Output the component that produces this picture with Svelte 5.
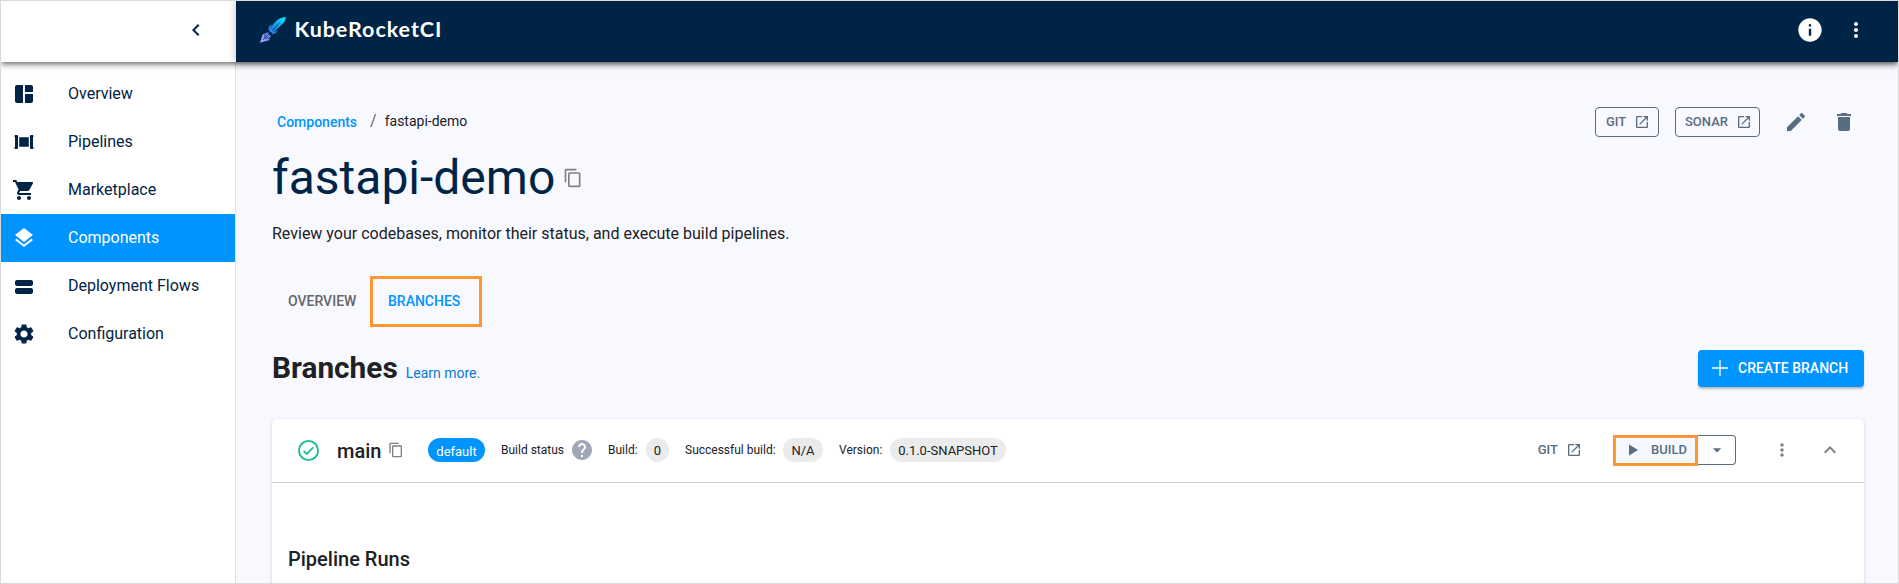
<script>
  const nav = [
    { label: 'Overview', icon: 'M11 21H5c-1.1 0-2-.9-2-2V5c0-1.1.9-2 2-2h6v18zm2 0h6c1.1 0 2-.9 2-2v-7h-8v9zm8-11V5c0-1.1-.9-2-2-2h-6v7h8z' },
    { label: 'Pipelines', icon: 'M7.200 7.200h9.600v9.600H7.200zM2.300 6.200q0-1.200 1.300-1.200h1.200q1.200 0 1.200 1.200v11.600q0 1.200-1.200 1.200H3.600q-1.300 0-1.300-1.200v-.6h.7V6.800h-.7zM18 6.200q0-1.200 1.200-1.200h1.200q1.300 0 1.300 1.200v.6H21v10.400h.7v.6q0 1.200-1.300 1.200h-1.200q-1.200 0-1.200-1.200z' },
    { label: 'Marketplace', icon: 'M7 18c-1.100 0-1.990.9-1.990 2S5.900 22 7 22s2-.9 2-2-.9-2-2-2zM1 2v2h2l3.600 7.590-1.350 2.450c-.16.28-.25.61-.25.96 0 1.100.9 2 2 2h12v-2H7.420c-.14 0-.25-.11-.25-.25l.03-.12.9-1.630h7.450c.75 0 1.410-.41 1.750-1.030l3.580-6.490A1.003 1.003 0 0 0 20 4H5.210l-.94-2H1zm16 16c-1.100 0-1.990.9-1.990 2s.89 2 1.990 2 2-.9 2-2-.9-2-2-2z' },
    { label: 'Components', active: true, icon: 'm11.990 18.540-7.370-5.730L3 14.070l9 7 9-7-1.630-1.270-7.380 5.740zM12 16l7.360-5.730L21 9l-9-7-9 7 1.630 1.270L12 16z' },
    { label: 'Deployment Flows', icon: 'M3 17v-1c0-1.300 1-2 2-2h14c1 0 2 .7 2 2v2c0 1.300-1 2-2 2H5c-1 0-2-.7-2-2zM5 6h14c1 0 2 .7 2 2v2c0 1.300-1 2-2 2H5c-1 0-2-.7-2-2V8c0-1.300 1-2 2-2z' },
    { label: 'Configuration', icon: 'M19.140 12.940c.04-.3.06-.61.06-.94 0-.32-.02-.64-.07-.94l2.030-1.580c.18-.14.23-.41.12-.61l-1.920-3.320c-.12-.22-.37-.29-.59-.22l-2.390.96c-.5-.38-1.030-.7-1.620-.94l-.36-2.540c-.04-.24-.24-.41-.48-.41h-3.840c-.24 0-.43.17-.47.41l-.36 2.540c-.59.24-1.130.57-1.620.94l-2.390-.96c-.22-.08-.47 0-.59.22L2.740 8.870c-.12.21-.08.47.12.61l2.030 1.580c-.05.3-.09.63-.09.94s.02.64.07.94l-2.030 1.580c-.18.14-.23.41-.12.61l1.920 3.320c.12.22.37.29.59.22l2.390-.96c.5.38 1.030.7 1.620.94l.36 2.540c.05.24.24.41.48.41h3.840c.24 0 .44-.17.47-.41l.36-2.540c.59-.24 1.130-.56 1.620-.94l2.390.96c.22.08.47 0 .59-.22l1.920-3.320c.12-.22.07-.47-.12-.61l-2.010-1.580zM12 15.600c-1.980 0-3.600-1.620-3.600-3.600s1.620-3.600 3.600-3.600 3.600 1.620 3.600 3.600-1.620 3.600-3.600 3.600z' }
  ];
  const COPY = 'M16 1H4c-1.100 0-2 .9-2 2v14h2V3h12V1zm3 4H8c-1.100 0-2 .9-2 2v14c0 1.100.9 2 2 2h11c1.100 0 2-.9 2-2V7c0-1.100-.9-2-2-2zm0 16H8V7h11v14z';
  const OPEN = 'M19 19H5V5h7V3H5c-1.110 0-2 .9-2 2v14c0 1.100.89 2 2 2h14c1.100 0 2-.9 2-2v-7h-2v7zM14 3v2h3.590l-9.830 9.830 1.410 1.410L19 6.410V10h2V3h-7z';
  const DOTS = 'M12 8c1.100 0 2-.9 2-2s-.9-2-2-2-2 .9-2 2 .9 2 2 2zm0 2c-1.100 0-2 .9-2 2s.9 2 2 2 2-.9 2-2-.9-2-2-2zm0 6c-1.100 0-2 .9-2 2s.9 2 2 2 2-.9 2-2-.9-2-2-2z';
</script>

{#snippet icon(d, size)}
  <svg width={size} height={size} viewBox="0 0 24 24" fill="currentColor"><path {d} /></svg>
{/snippet}

<div class="app">
  <header>
    <div class="collapse">
      <svg width="24" height="24" viewBox="0 0 24 24" fill="currentColor"><path d="M15.410 7.410 14 6l-6 6 6 6 1.410-1.410L10.830 12z" /></svg>
    </div>
    <div class="bar">
      <svg class="rocket" width="28" height="28" viewBox="0 0 28 28">
        <defs>
          <linearGradient id="rg" x1="26" y1="2" x2="2" y2="26" gradientUnits="userSpaceOnUse">
            <stop offset="0" stop-color="#00e5ff" /><stop offset=".5" stop-color="#1f80e8" /><stop offset=".7" stop-color="#6a8cf0" /><stop offset="1" stop-color="#a9a0ff" />
          </linearGradient>
        </defs>
        <path fill="url(#rg)" d="M26.800 1c-4.500.2-8 2.200-11 5.600L11.500 11.500c-1.200 1.400-1.700 3-.6 4.300 1.200 1.100 2.900.6 4.300-.6l5.600-4.800c3.300-3 5.700-5.200 6-9.400z" />
        <path fill="url(#rg)" d="M13 8.300 9.700 10.500l.6 1.300-1.500 1.600 1.600.8zM18.500 14l-2 3.700-1.400-.6-1.600 1.500-.9-1.800zM3.600 18.200 9.500 16.200v2.800l2.500.2-2 5L1 26.800z" />
        <path fill="none" stroke="#002446" d="M20.500 7.200 13.500 14" stroke-width=".8" />
        <path fill="none" stroke="#002446" stroke-width=".7" d="M9.500 18.500 4 24M6 18v4h5" />
      </svg>
      <span class="brand">KubeRocketCI</span>
      <div class="bar-icons">
        <svg width="28" height="28" viewBox="0 0 24 24" fill="currentColor"><path d="M12 2C6.480 2 2 6.480 2 12s4.480 10 10 10 10-4.480 10-10S17.520 2 12 2zm1 15h-2v-6h2v6zm0-8h-2V7h2v2z" /></svg>
        {@render icon(DOTS, 24)}
      </div>
    </div>
  </header>

  <div class="body">
    <nav>
      {#each nav as item}
        <div class="item" class:active={item.active}>{@render icon(item.icon, 24)}<span>{item.label}</span></div>
      {/each}
    </nav>

    <main>
      <div class="top">
        <div class="crumbs"><span class="link">Components</span><span class="slash">/</span><span class="here">fastapi-demo</span></div>
        <div class="actions">
          <button class="outlined git">GIT {@render icon(OPEN, 16)}</button>
          <button class="outlined sonar">SONAR {@render icon(OPEN, 16)}</button>
          <span class="edit">{@render icon('M3 17.250V21h3.750L17.810 9.940l-3.750-3.750L3 17.250zM20.710 7.040c.39-.39.39-1.020 0-1.410l-2.340-2.340a.9959.9959 0 0 0-1.410 0l-1.830 1.830 3.750 3.750 1.830-1.830z', 24)}</span>
          <span class="bin">{@render icon('M6 19c0 1.100.9 2 2 2h8c1.100 0 2-.9 2-2V7H6v12zM19 4h-3.500l-1-1h-5l-1 1H5v2h14V4z', 24)}</span>
        </div>
      </div>

      <div class="title"><h1>fastapi-demo</h1>{@render icon(COPY, 20)}</div>
      <p class="desc">Review your codebases, monitor their status, and execute build pipelines.</p>

      <div class="tabs"><span class="tab">OVERVIEW</span><span class="tab selected">BRANCHES</span></div>

      <div class="section">
        <h2>Branches</h2><span class="learn">Learn more.</span>
        <button class="create">
          <svg width="20" height="20" viewBox="0 0 20 20"><path d="M10 2v16M2 10h16" stroke="currentColor" stroke-width="1.300" /></svg>
          <span>CREATE BRANCH</span>
        </button>
      </div>

      <section class="card">
        <div class="row">
          <svg class="ok" width="25" height="25" viewBox="0 0 24 24" fill="none" stroke="#18be94"><circle cx="12" cy="12" r="9.200" stroke-width="1.800" /><path d="m7.300 12.300 3.100 3 6.200-6.300" stroke-width="1.700" /></svg>
          <span class="branch">main</span>
          <span class="copy">{@render icon(COPY, 16)}</span>
          <span class="chip blue">default</span>
          <span class="lab status">Build status</span>
          <svg class="help" width="24" height="24" viewBox="0 0 24 24" fill="#a2a7b7"><path d="M12 2C6.480 2 2 6.480 2 12s4.480 10 10 10 10-4.480 10-10S17.520 2 12 2zm1 17h-2v-2h2v2zm2.070-7.750-.9.920C13.450 12.900 13 13.500 13 15h-2v-.5c0-1.100.45-2.100 1.170-2.830l1.240-1.260c.37-.36.59-.86.59-1.410 0-1.100-.9-2-2-2s-2 .9-2 2H8c0-2.210 1.790-4 4-4s4 1.790 4 4c0 .88-.36 1.680-.93 2.250z" /></svg>
          <span class="lab l2">Build:</span><span class="chip c0">0</span>
          <span class="lab l3">Successful build:</span><span class="chip cna">N/A</span>
          <span class="lab l4">Version:</span><span class="chip cver">0.1.0-SNAPSHOT</span>
          <div class="right">
            <span class="gitlink">GIT {@render icon(OPEN, 16)}</span>
            <div class="split">
              <button class="build"><svg width="9" height="12" viewBox="0 0 9 12" fill="currentColor"><path d="M0 .5v11L9 6z" /></svg>BUILD</button>
              <button class="drop">{@render icon('m7 10 5 5 5-5z', 20)}</button>
            </div>
            <span class="more">{@render icon(DOTS, 20)}</span>
            {@render icon('m12 8-6 6 1.410 1.410L12 10.830l4.590 4.580L18 14z', 24)}
          </div>
        </div>
        <h3>Pipeline Runs</h3>
      </section>
    </main>
  </div>
</div>

<style>
  :global(body) { margin: 0; overflow: hidden; }
  .app { box-sizing: border-box; width: 1899px; height: 584px; border: 1px solid #dbdbdb; overflow: hidden; display: flex; flex-direction: column; font-family: Roboto, "Liberation Sans", sans-serif; color: #202124; background: #f8f9ff; }
  .app :global(*) { box-sizing: border-box; }
  svg { display: block; flex: none; }
  h1, h2, h3, p { margin: 0; }
  button { font: inherit; cursor: pointer; }
  header { display: flex; flex: none; height: 61px; z-index: 2; position: relative; box-shadow: 0 2px 4px -1px rgba(0,0,0,.4), 0 4px 5px rgba(0,0,0,.2), 0 1px 10px rgba(0,0,0,.14); }
  .collapse { width: 235px; background: #fff; color: #002446; display: flex; align-items: center; justify-content: flex-end; padding: 0 28px 3px 0; }
  .bar { flex: 1; background: #002446; color: #fff; display: flex; align-items: center; padding: 0 30px 3px 23px; box-shadow: 0 0 8px rgba(0,0,0,.25); }
  .brand { font: 700 21.500px/26px Lato, sans-serif; letter-spacing: .95px; margin-left: 7.5px; padding-bottom: 2px; }
  .bar-icons { margin-left: auto; display: flex; align-items: center; gap: 20px; }
  .body { display: flex; flex: 1; min-height: 0; }
  nav { width: 235px; background: #fff; border-right: 1px solid #e0e0e4; padding-top: 8px; color: #002446; }
  .item { height: 48px; display: flex; align-items: center; padding-left: 11px; gap: 32px; font-size: 16px; }
  .item span { padding-bottom: 2px; }
  .active { background: #0094ff; color: #fff; }
  main { flex: 1; padding: 41px 34px 0 36px; }
  .top { display: flex; justify-content: space-between; align-items: center; height: 38px; }
  .crumbs { display: flex; align-items: baseline; font-size: 14px; padding: 0 0 4px 5px; }
  .link { color: #0094ff; font-weight: 500; position: relative; top: 1px; }
  .slash { margin: 0 8px 0 13px; font-size: 16px; color: #666; }
  .actions { display: flex; align-items: center; color: #596d80; padding-right: 8px; }
  .outlined { height: 30px; border: 1px solid #596d80; border-radius: 4px; background: transparent; color: #596d80; font-size: 13px; font-weight: 500; padding: 0 7px 1px 9px; display: flex; align-items: center; justify-content: space-between; }
  .git { width: 64px; margin-right: 16px; padding: 0 8px 1px 10px; }
  .sonar { width: 85px; }
  .edit { margin: 0 24px; }
  .title { display: flex; align-items: center; gap: 8px; height: 56px; margin-top: 9px; color: #808080; }
  h1 { font-size: 48px; font-weight: 400; line-height: 56px; color: #002446; }
  .desc { font-size: 16px; line-height: 24px; margin-top: 16px; }
  .tabs { display: flex; height: 51px; margin-top: 30px; font-size: 14px; font-weight: 500; }
  .tab { width: 98px; padding: 16px 0 0 16px; color: #666; line-height: 18px; }
  .selected { width: 112px; border: 3px solid #ff9633; padding: 13px 0 0 15px; color: #0094ff; }
  .section { display: flex; align-items: center; height: 38px; margin-top: 22px; }
  h2 { font-size: 29.800px; font-weight: 700; line-height: 34px; }
  .learn { font-size: 14px; color: #0a7bd0; margin: 10px 0 0 8px; }
  .create { margin-left: auto; width: 166px; height: 37px; border: 0; border-radius: 4px; background: #0094ff; color: #fff; display: flex; align-items: center; padding: 0 0 0 12px; gap: 8px; font-size: 14px; font-weight: 500; box-shadow: 0 2px 2px rgba(0,0,0,.25); white-space: nowrap; }
  .card { background: #fff; margin-top: 32px; height: 200px; border-radius: 5px; box-shadow: 0 1px 3px rgba(60,70,110,.25); }
  .row { height: 64px; border-bottom: 1px solid #cfcfcf; display: flex; align-items: center; padding: 0 22px 1px 24px; }
  .branch { font-size: 20px; font-weight: 500; margin-left: 16px; width: 51px; padding-top: 2px; }
  .copy { color: #808080; }
  .chip { height: 24px; border-radius: 12px; background: #ebebeb; font-size: 13px; line-height: 25px; text-align: center; }
  .blue { background: #0094ff; color: #fff; width: 57px; margin-left: 24px; line-height: 27px; }
  .lab { font-size: 12px; white-space: nowrap; padding-bottom: 1px; }
  .status { margin-left: 16px; width: 69px; }
  .l2 { margin-left: 14px; width: 38px; }
  .c0 { width: 23px; }
  .l3 { margin-left: 16px; width: 98px; }
  .cna { width: 40px; }
  .l4 { margin-left: 16px; width: 51px; }
  .cver { width: 116px; }
  .right { margin-left: auto; display: flex; align-items: center; color: #808080; }
  .gitlink { display: flex; gap: 8px; align-items: center; font-size: 13px; font-weight: 500; color: #596d80; margin-right: 31px; padding-bottom: 1px; }
  .split { display: flex; align-items: center; color: #596d80; }
  .build { width: 85px; height: 31px; border: 3px solid #ff9633; background: #f5f9ff; color: inherit; padding: 0 0 1px 13px; display: flex; align-items: center; gap: 13px; font-size: 13px; font-weight: 500; }
  .drop { width: 38px; height: 30px; background: #fff; border: 1px solid #596d80; border-left: 0; border-radius: 0 4px 4px 0; color: inherit; padding: 0; display: grid; place-items: center; }
  .more { margin: 0 26px 0 36px; }
  h3 { font-size: 20px; font-weight: 500; line-height: 24px; padding: 64px 0 0 16px; }
</style>
